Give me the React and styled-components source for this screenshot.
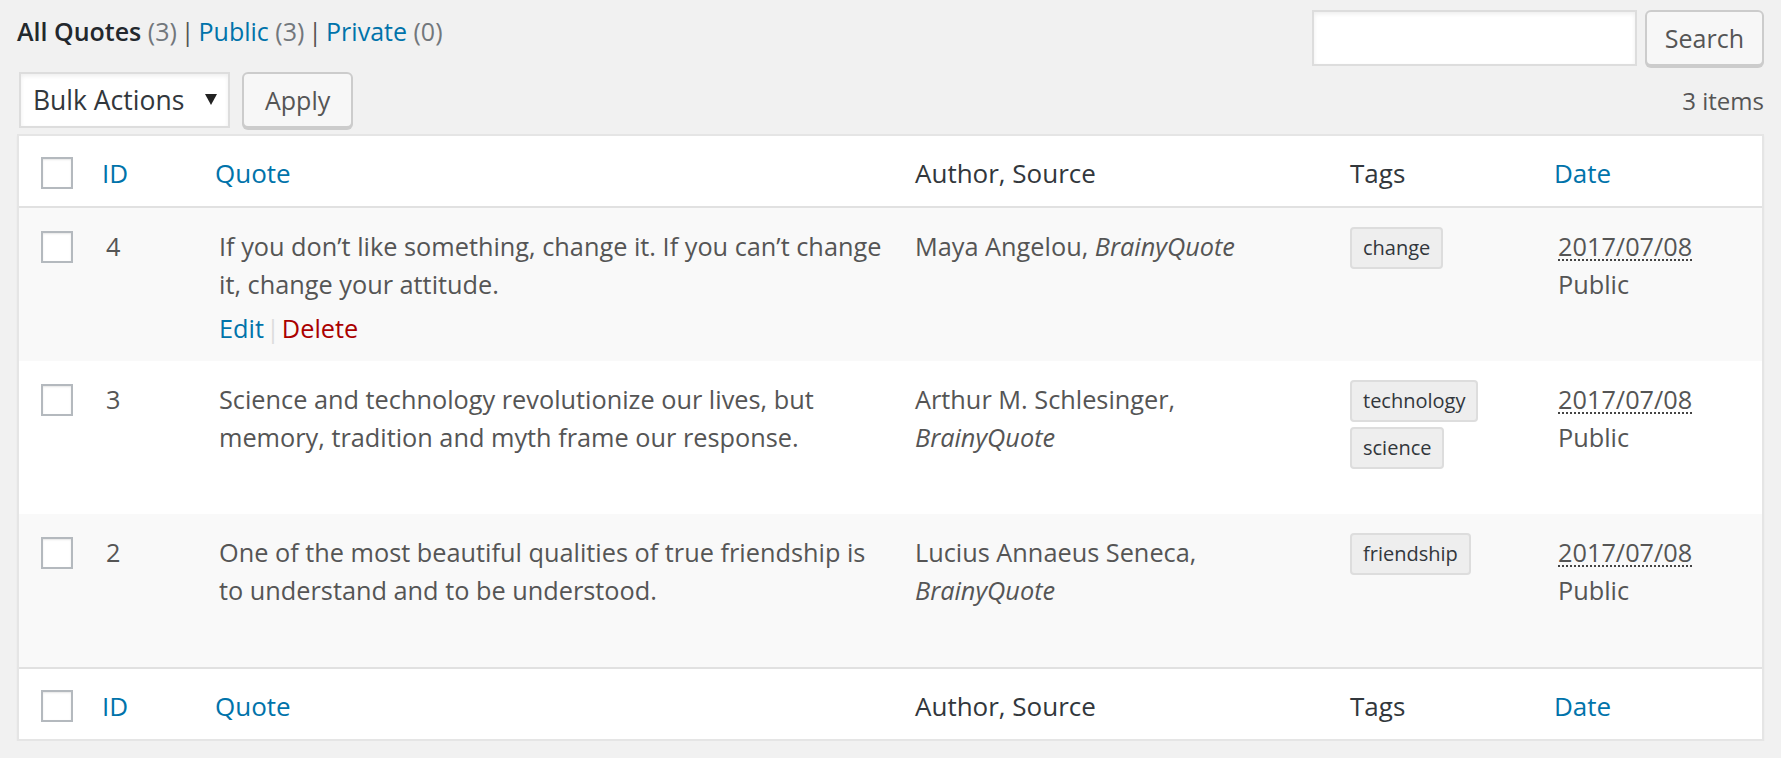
import React from 'react';
import styled, { createGlobalStyle } from 'styled-components';

// --- data ---
const views = [
  { label: 'All Quotes', count: 3, current: true },
  { label: 'Public', count: 3 },
  { label: 'Private', count: 0 },
];

const quotes = [
  {
    id: 4,
    text: 'If you don’t like something, change it. If you can’t change it, change your attitude.',
    author: 'Maya Angelou',
    source: 'BrainyQuote',
    tags: ['change'],
    date: '2017/07/08',
    status: 'Public',
  },
  {
    id: 3,
    text: 'Science and technology revolutionize our lives, but memory, tradition and myth frame our response.',
    author: 'Arthur M. Schlesinger',
    source: 'BrainyQuote',
    tags: ['technology', 'science'],
    date: '2017/07/08',
    status: 'Public',
  },
  {
    id: 2,
    text: 'One of the most beautiful qualities of true friendship is to understand and to be understood.',
    author: 'Lucius Annaeus Seneca',
    source: 'BrainyQuote',
    tags: ['friendship'],
    date: '2017/07/08',
    status: 'Public',
  },
];

const COLS = '68px 113px 696px 435px 208px 1fr';

// --- styles ---
const GlobalStyle = createGlobalStyle`
  html, body {
    margin: 0;
    padding: 0;
    background: #f1f1f1;
    overflow: hidden;
  }
  body {
    font-family: "Open Sans", "Noto Sans", "Liberation Sans", sans-serif;
    color: #555;
  }
  * { box-sizing: border-box; }
`;

const Page = styled.div`
  padding: 10px 17px 0;
`;

const TopBar = styled.div`
  display: flex;
  justify-content: space-between;
  align-items: flex-start;
`;

const Views = styled.ul`
  list-style: none;
  margin: 3px 0 0;
  padding: 0;
  display: flex;
  font-size: 25px;
  line-height: 36px;
  color: #555;
`;

const ViewLink = styled.a`
  color: ${({ $current }) => ($current ? '#23282d' : '#0073aa')};
  font-weight: ${({ $current }) => ($current ? 600 : 400)};
  text-decoration: none;
  cursor: pointer;
`;

const Count = styled.span`
  color: #72777c;
  font-weight: 400;
`;

const Sep = styled.span`
  margin: 0 ${({ $light }) => ($light ? 2 : 4)}px;
  color: ${({ $light }) => ($light ? '#ddd' : '#555')};
`;

const SearchBox = styled.div`
  display: flex;
  gap: 8px;
`;

const SearchInput = styled.input`
  width: 325px;
  height: 56px;
  border: 2px solid #ddd;
  background: #fff;
  box-shadow: inset 0 2px 4px rgba(0, 0, 0, 0.07);
  font: inherit;
  font-size: 24px;
  outline: none;
`;

const Button = styled.button`
  height: 56px;
  padding: 0 ${({ $pad }) => $pad || 19}px;
  font-family: inherit;
  font-size: 25px;
  color: #555;
  background: #f7f7f7;
  border: 2px solid #ccc;
  border-radius: 6px;
  box-shadow: 0 2px 0 #ccc;
  cursor: pointer;
`;

const Toolbar = styled.div`
  display: flex;
  align-items: center;
  gap: 12px;
  margin-top: 6px;
`;

const SelectWrap = styled.div`
  position: relative;
  margin-left: 2px;
`;

const Select = styled.select`
  appearance: none;
  width: 211px;
  height: 56px;
  padding: 0 12px;
  border: 2px solid #ddd;
  border-radius: 0;
  background: #fff;
  box-shadow: inset 0 2px 4px rgba(0, 0, 0, 0.07);
  font-family: inherit;
  font-size: 26.5px;
  color: #32373c;
  outline: none;
`;

const Caret = styled.span`
  position: absolute;
  right: 13px;
  top: 22px;
  width: 0;
  height: 0;
  border-left: 6px solid transparent;
  border-right: 6px solid transparent;
  border-top: 11px solid #222;
  pointer-events: none;
`;

const ItemCount = styled.span`
  margin-left: auto;
  font-size: 24px;
  color: #555;
`;

const Table = styled.div`
  margin-top: 6px;
  background: #fff;
  border: 2px solid #e5e5e5;
  box-shadow: 0 2px 2px rgba(0, 0, 0, 0.04);
`;

const HeadRow = styled.div`
  display: grid;
  grid-template-columns: ${COLS};
  align-items: center;
  height: 72px;
  padding-top: 4px;
  ${({ $foot }) => ($foot ? 'border-top' : 'border-bottom')}: 2px solid #e1e1e1;
`;

const HeadCell = styled.div`
  padding: 0 19px;
  font-size: 26px;
  line-height: 36px;
  color: #32373c;
`;

const SortLink = styled.a`
  margin-left: -4px;
  color: #0073aa;
  text-decoration: none;
  cursor: pointer;
`;

const CheckCell = styled.div`
  padding-left: 22px;
  align-self: ${({ $top }) => ($top ? 'start' : 'center')};
`;

const Checkbox = styled.span`
  display: block;
  width: 32px;
  height: 32px;
  margin-top: ${({ $top }) => ($top ? '4px' : '0')};
  background: #fff;
  border: 2px solid #b4b9be;
  box-shadow: inset 0 1px 2px rgba(0, 0, 0, 0.1);
`;

const Row = styled.div`
  display: grid;
  grid-template-columns: ${COLS};
  align-items: start;
  padding: 19px 0 14px;
  background: ${({ $alt }) => ($alt ? '#f9f9f9' : '#fff')};
`;

const Cell = styled.div`
  padding: 0 ${({ $padRight }) => $padRight || 19}px 0 19px;
  font-size: 25.3px;
  line-height: 38px;
  color: #555;
`;

const RowActions = styled.div`
  padding-top: 6px;
  visibility: ${({ $show }) => ($show ? 'visible' : 'hidden')};
`;

const ActionLink = styled.a`
  color: ${({ $danger }) => ($danger ? '#a00' : '#0073aa')};
  text-decoration: none;
  cursor: pointer;
`;

const TagList = styled.div`
  display: flex;
  flex-direction: column;
  align-items: flex-start;
  gap: 5px;
`;

const Tag = styled.span`
  padding: 4px 11px;
  background: #eee;
  border: 2px solid #ddd;
  border-radius: 4px;
  font-size: 20px;
  line-height: 30px;
  color: #32373c;
`;

const DateText = styled.abbr`
  text-decoration: underline dotted #444;
  text-decoration-thickness: 2px;
  text-underline-offset: 3px;
`;

// --- parts ---
const HeaderCells = () => (
  <>
    <CheckCell>
      <Checkbox />
    </CheckCell>
    <HeadCell>
      <SortLink>ID</SortLink>
    </HeadCell>
    <HeadCell>
      <SortLink>Quote</SortLink>
    </HeadCell>
    <HeadCell>Author, Source</HeadCell>
    <HeadCell>Tags</HeadCell>
    <HeadCell>
      <SortLink>Date</SortLink>
    </HeadCell>
  </>
);

const QuoteRow = ({ quote, index }) => (
  <Row $alt={index % 2 === 0}>
    <CheckCell $top>
      <Checkbox $top />
    </CheckCell>
    <Cell>{quote.id}</Cell>
    <Cell $padRight={12}>
      {quote.text}
      <RowActions $show={index === 0}>
        <ActionLink>Edit</ActionLink>
        <Sep $light>|</Sep>
        <ActionLink $danger>Delete</ActionLink>
      </RowActions>
    </Cell>
    <Cell $padRight={50}>
      {quote.author}, <i>{quote.source}</i>
    </Cell>
    <Cell>
      <TagList>
        {quote.tags.map((tag) => (
          <Tag key={tag}>{tag}</Tag>
        ))}
      </TagList>
    </Cell>
    <Cell>
      <DateText title={quote.date}>{quote.date}</DateText>
      <br />
      {quote.status}
    </Cell>
  </Row>
);

export default function App() {
  return (
    <Page>
      <GlobalStyle />
      <TopBar>
        <Views>
          {views.map((view, i) => (
            <li key={view.label}>
              <ViewLink $current={view.current}>
                {view.label} <Count>({view.count})</Count>
              </ViewLink>
              {i < views.length - 1 && <Sep>|</Sep>}
            </li>
          ))}
        </Views>
        <SearchBox>
          <SearchInput type="search" />
          <Button $pad={18}>Search</Button>
        </SearchBox>
      </TopBar>

      <Toolbar>
        <SelectWrap>
          <Select defaultValue="-1">
            <option value="-1">Bulk Actions</option>
            <option value="delete">Delete</option>
          </Select>
          <Caret />
        </SelectWrap>
        <Button $pad={21}>Apply</Button>
        <ItemCount>3 items</ItemCount>
      </Toolbar>

      <Table>
        <HeadRow>
          <HeaderCells />
        </HeadRow>
        {quotes.map((quote, i) => (
          <QuoteRow key={quote.id} quote={quote} index={i} />
        ))}
        <HeadRow $foot>
          <HeaderCells />
        </HeadRow>
      </Table>
    </Page>
  );
}
